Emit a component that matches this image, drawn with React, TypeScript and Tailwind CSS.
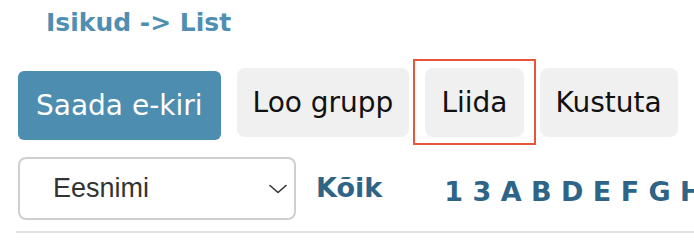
import React from "react";

const letters = ["1", "3", "A", "B", "D", "E", "F", "G", "H"];

function GrayButton({ label }: { label: string }) {
  return (
    <button className="flex h-[69px] items-center rounded-lg bg-[#f0f0f0] px-4 text-[28px] leading-none text-[#111]">
      {label}
    </button>
  );
}

export default function App() {
  return (
    <div className="h-[234px] w-full overflow-hidden bg-white pt-[10px] font-['DejaVu_Sans',Verdana,sans-serif]">
      <h1 className="ml-[46px] text-[25px] font-bold leading-none text-[#4f8fb2]">
        Isikud -&gt; List
      </h1>

      <div className="ml-[18px] mt-[33px] flex items-start gap-4 whitespace-nowrap">
        <button className="mt-[3px] flex h-[69px] items-center rounded-md bg-[#4d8db0] px-[18px] text-[28px] leading-none text-white">
          Saada e-kiri
        </button>
        <GrayButton label="Loo grupp" />
        <div className="relative">
          <GrayButton label="Liida" />
          <span className="pointer-events-none absolute -bottom-[8px] -left-[12px] -right-[12px] -top-[9px] border-2 border-[#e8553b]" />
        </div>
        <GrayButton label="Kustuta" />
      </div>

      <div className="ml-[18px] mt-[17px] flex items-start whitespace-nowrap">
        <div className="flex h-[63px] w-[278px] shrink-0 items-center justify-between rounded-lg border-2 border-[#cfcfcf] pl-[33px] pr-[7px]">
          <span className="font-['Liberation_Sans',Arial,sans-serif] text-[27px] leading-none text-[#333]">
            Eesnimi
          </span>
          <svg width="18" height="10" viewBox="0 0 18 10" fill="none">
            <polyline
              points="1,1.5 9,8.5 17,1.5"
              stroke="#333"
              strokeWidth="1.6"
              strokeLinecap="round"
              strokeLinejoin="round"
            />
          </svg>
        </div>
        <a className="ml-[20px] mt-[17px] text-[27px] font-bold leading-none text-[#2e6486]">
          Kõik
        </a>
        <div className="ml-[62px] mt-[21px] text-[27px] font-bold leading-none text-[#2e6486]">
          {letters.map((l, i) => (
            <React.Fragment key={l}>
              {i > 0 && " "}
              <a>{l}</a>
            </React.Fragment>
          ))}
        </div>
      </div>

      <div className="ml-4 mt-[11px] h-[2px] bg-[#e2e2e2]" />
    </div>
  );
}
